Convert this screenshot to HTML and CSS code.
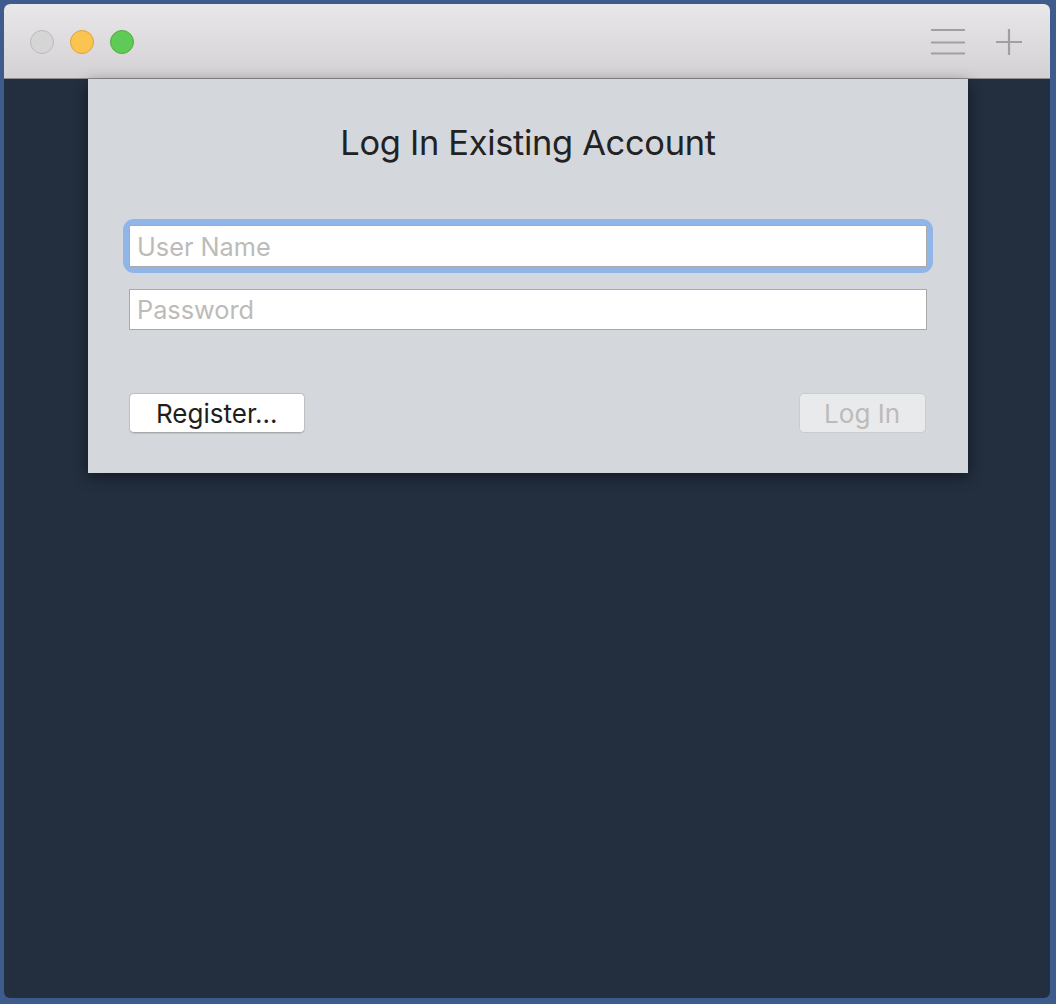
FILE: index.html
```html
<!DOCTYPE html>
<html>
<head>
<meta charset="utf-8">
<link rel="stylesheet" href="styles.css">
</head>
<body>
<div class="window">
  <div class="titlebar">
    <div class="lights">
      <span class="light close"></span>
      <span class="light min"></span>
      <span class="light max"></span>
    </div>
    <div class="tools">
      <svg class="icon" width="34" height="28" viewBox="0 0 34 28">
        <path d="M0 2H34M0 14.5H34M0 25.5H34" stroke="#a09fa1" stroke-width="2.2" fill="none"/>
      </svg>
      <svg class="icon" width="28" height="28" viewBox="0 0 28 28">
        <path d="M14 1V27M1 14H27" stroke="#a09fa1" stroke-width="2.2" fill="none"/>
      </svg>
    </div>
  </div>
  <div class="content">
    <div class="sheet">
      <h1 class="title">Log In Existing Account</h1>
      <div class="field focus"><input type="text" placeholder="User Name"></div>
      <div class="field"><input type="password" placeholder="Password"></div>
      <div class="actions">
        <button class="btn">Register...</button>
        <button class="btn disabled">Log In</button>
      </div>
    </div>
  </div>
</div>
</body>
</html>
```
FILE: styles.css
```css
* { box-sizing: border-box; }
html, body { margin: 0; height: 100%; }
body {
  background: #3d5b8c;
  padding: 4px 6px 6px 4px;
  font-family: Inter, "Open Sans", sans-serif;
}
.window {
  height: 994px;
  border-radius: 6px;
  overflow: hidden;
  display: flex;
  flex-direction: column;
  background: #232e3f;
}
.titlebar {
  height: 75px;
  flex: none;
  background: linear-gradient(#e9e7e9, #d3d1d3);
  border-bottom: 1px solid #8f8e90;
  display: flex;
  align-items: center;
  justify-content: space-between;
  padding: 1px 27px 0 26px;
}
.lights { display: flex; gap: 16px; }
.light {
  width: 24px; height: 24px; border-radius: 50%;
  display: block;
}
.close { background: #d6d5d6; border: 1px solid #bcbbbc; }
.min { background: #fbc350; border: 1px solid #dea53a; }
.max { background: #5fca55; border: 1px solid #4aad42; }
.tools { display: flex; align-items: center; gap: 30px; }
.icon { display: block; }
.content {
  flex: 1;
  padding: 0 82px 0 84px;
}
.sheet {
  background: #d4d7dc;
  height: 394px;
  box-shadow: 0 4px 14px rgba(0,0,0,0.45);
  padding: 40px 41px 0 41px;
}
.title {
  margin: 0 0 58px 0;
  text-align: center;
  font-weight: 400;
  font-size: 34.4px;
  line-height: 48px;
  color: #222;
  letter-spacing: -0.3px;
}
.field {
  margin-bottom: 22px;
  border-radius: 5px;
}
.field.focus {
  box-shadow: 0 0 0 6px #90b6e8;
}
.field input {
  display: block;
  width: 100%;
  height: 42px;
  border: 1px solid #a9a9a9;
  background: #fff;
  font: inherit;
  font-size: 25.3px;
  padding: 0 7px;
  color: #222;
  outline: none;
}
.field input[type=password] { height: 41px; }
.field input::placeholder { color: #bdbbba; }
.actions {
  margin-top: 63px;
  display: flex;
  justify-content: space-between;
  padding-right: 1px;
}
.btn {
  height: 40px;
  font: inherit;
  font-size: 26px;
  color: #1e1e1e;
  background: #fff;
  border: 1px solid #c0c0c0;
  border-bottom-color: #a9a9a9;
  border-radius: 5px;
  padding: 0 26px;
  box-shadow: 0 0.5px 1px rgba(0,0,0,0.1);
}
.btn.disabled {
  background: #e9eaec;
  color: #bdbbba;
  border-color: #cbcccf;
  box-shadow: none;
  padding: 0 25px 0 24px;
}
```
